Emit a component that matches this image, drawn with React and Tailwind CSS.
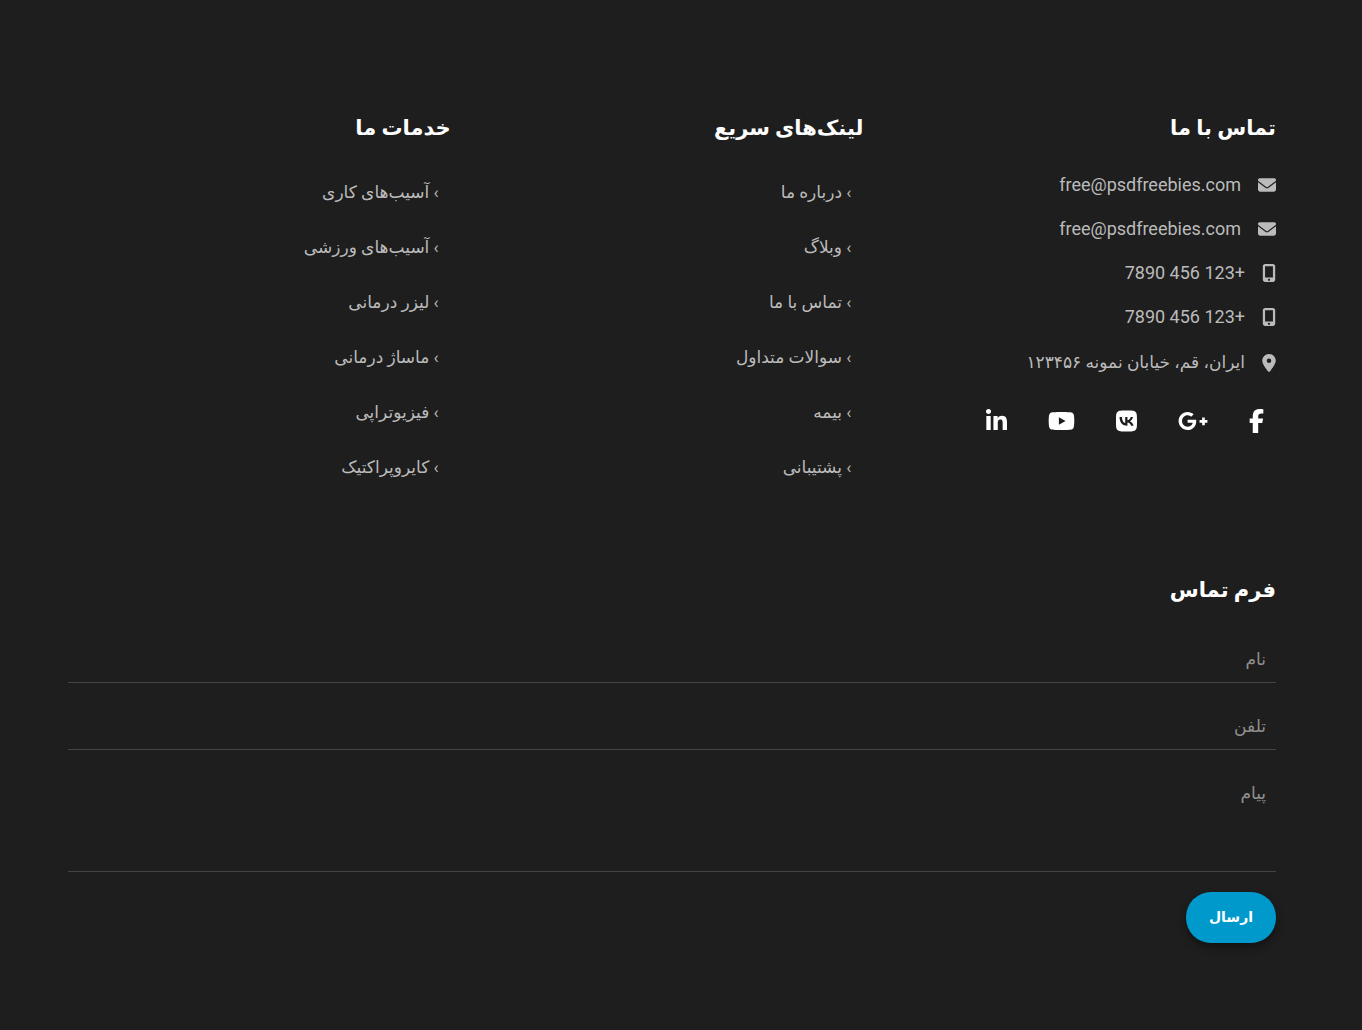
import React, { useState } from "react";
import { FaEnvelope, FaMobileScreenButton, FaLocationDot, FaFacebookF, FaGooglePlusG, FaVk, FaYoutube, FaLinkedinIn } from "react-icons/fa6";

const contacts = [
  { icon: FaEnvelope, width: "w-[18px]", label: "free@psdfreebies.com", href: "mailto:free@psdfreebies.com" },
  { icon: FaEnvelope, width: "w-[18px]", label: "free@psdfreebies.com", href: "mailto:free@psdfreebies.com" },
  { icon: FaMobileScreenButton, width: "w-[14px]", label: "+123 456 7890", href: "tel:+1234567890" },
  { icon: FaMobileScreenButton, width: "w-[14px]", label: "+123 456 7890", href: "tel:+1234567890" },
];

// the brand glyphs share a height but not a width
const socials = [
  { name: "Facebook", icon: FaFacebookF, width: "w-[15px]" },
  { name: "Google Plus", icon: FaGooglePlusG, width: "w-[30px]" },
  { name: "VK", icon: FaVk, width: "w-[21px]" },
  { name: "YouTube", icon: FaYoutube, width: "w-[27px]" },
  { name: "LinkedIn", icon: FaLinkedinIn, width: "w-[21px]" },
];

const quickLinks = ["درباره ما", "وبلاگ", "تماس با ما", "سوالات متداول", "بیمه", "پشتیبانی"];
const services = ["آسیب‌های کاری", "آسیب‌های ورزشی", "لیزر درمانی", "ماساژ درمانی", "فیزیوتراپی", "کایروپراکتیک"];

const fieldClass =
  "block w-full px-[10px] py-[10px] text-[17px] leading-[26px] bg-transparent border-b border-[#444] text-[#bbb] placeholder-[#8f8f8f] outline-none focus:border-[#0099cc]";

const Title = ({ children }) => <h3 className="text-[21px] leading-8 font-bold text-white">{children}</h3>;

const LinkList = ({ title, items }) => (
  <div>
    <Title>{title}</Title>
    <ul className="mt-[21px] px-3">
      {items.map((item) => (
        <li key={item} className="h-[55px] flex items-center">
          <a href="#" className="text-[17px] text-[#bbb] hover:text-white">
            › {item}
          </a>
        </li>
      ))}
    </ul>
  </div>
);

const ContactForm = () => {
  const [values, setValues] = useState({ name: "", phone: "", message: "" });

  const handleChange = (e) => setValues({ ...values, [e.target.name]: e.target.value });

  return (
    <form className="mt-[30px] flex flex-col gap-5" onSubmit={(e) => e.preventDefault()}>
      <input className={fieldClass} type="text" name="name" aria-label="نام" placeholder="نام" value={values.name} onChange={handleChange} />
      <input className={fieldClass} type="tel" dir="rtl" name="phone" aria-label="تلفن" placeholder="تلفن" value={values.phone} onChange={handleChange} />
      <textarea
        className={`${fieldClass} h-[102px] resize-none`}
        name="message"
        aria-label="پیام"
        placeholder="پیام"
        value={values.message}
        onChange={handleChange}
      />
      <button
        type="submit"
        className="self-start px-[23px] py-3 text-sm leading-[27px] font-bold text-white bg-[#0099cc] rounded-[25px] shadow-[0_4px_8px_rgba(0,0,0,0.4)] hover:bg-[#0088b8]">
        ارسال
      </button>
    </form>
  );
};

const App = () => {
  return (
    <footer dir="rtl" className="min-h-screen bg-[#1e1e1e] pt-28 pb-[87px] pl-[68px] pr-[86px] font-['Roboto','DejaVu_Sans',sans-serif]">
      <div className="grid grid-cols-3 gap-[30px]">
        <div>
          <Title>تماس با ما</Title>
          <ul className="mt-[19px] text-[#bbb]">
            {contacts.map(({ icon: Icon, width, label, href }, i) => (
              <li key={i} className="h-11 flex items-center gap-[17px] text-lg">
                <Icon className={`shrink-0 h-[18px] ${width}`} />
                <a href={href} className="hover:text-white">
                  {label}
                </a>
              </li>
            ))}
            <li className="h-12 flex items-center gap-[17px] text-[17px]">
              <FaLocationDot className="shrink-0 h-[18px] w-[14px]" />
              <span>ایران، قم، خیابان نمونه ۱۲۳۴۵۶</span>
            </li>
          </ul>
          <div className="mt-[22px] px-3 flex gap-[41px] text-white">
            {socials.map(({ name, icon: Icon, width }) => (
              <a key={name} href="#" aria-label={name} className="hover:text-[#0099cc]">
                <Icon className={`h-6 ${width}`} />
              </a>
            ))}
          </div>
        </div>
        <LinkList title="لینک‌های سریع" items={quickLinks} />
        <LinkList title="خدمات ما" items={services} />
      </div>

      <div className="mt-[79px]">
        <Title>فرم تماس</Title>
        <ContactForm />
      </div>
    </footer>
  );
};

export default App;
